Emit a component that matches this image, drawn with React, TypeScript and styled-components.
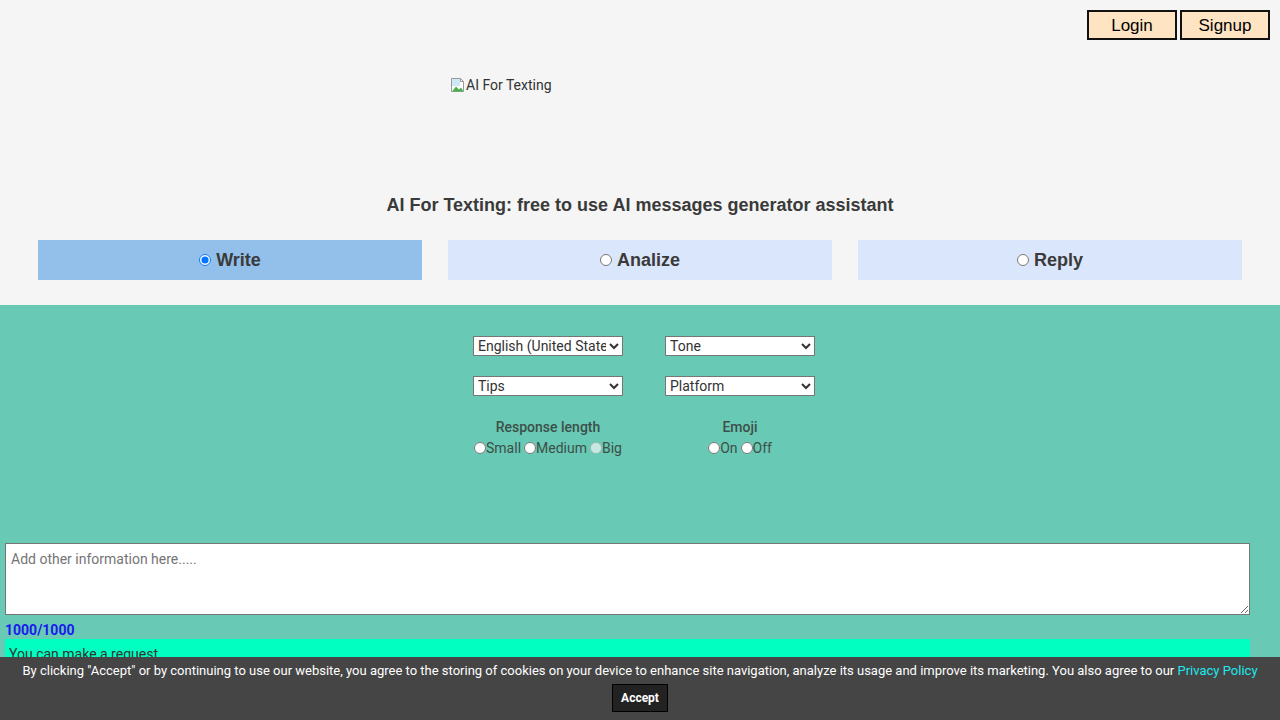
import React from "react";
import styled, { createGlobalStyle } from "styled-components";

const GlobalStyle = createGlobalStyle`
  html, body {
    margin: 0;
    padding: 0;
    background: #68c9b4;
    font-family: Roboto, "Liberation Sans", sans-serif;
    color: #333;
  }
`;

const Header = styled.header`
  background-color: #f5f5f5;
  padding: 10px 0 25px;
  display: flex;
  flex-direction: column;
`;

const AuthBar = styled.div`
  display: flex;
  justify-content: flex-end;
  gap: 3px;
  padding-right: 10px;
`;

const AuthButton = styled.button`
  width: 90px;
  height: 30px;
  background-color: #ffe4c4;
  border: 2px solid #111;
  font-family: "Liberation Sans", Arial, sans-serif;
  font-size: 17px;
  color: #000;
  padding: 2px 0 0;
`;

const LogoRow = styled.div`
  height: 142px;
  padding-left: 450px;
  padding-top: 37px;
  box-sizing: border-box;
`;

const LogoAlt = styled.span`
  display: inline-flex;
  align-items: center;
  font-size: 14px;
  color: #333;
`;

const Title = styled.h1`
  margin: 13px 0 24px;
  text-align: center;
  font-family: "Liberation Sans", Arial, sans-serif;
  font-size: 18px;
  font-weight: 700;
  color: #3a3a3a;
`;

const Tabs = styled.div`
  display: grid;
  grid-template-columns: repeat(3, 1fr);
  gap: 26px;
  padding: 0 38px;
`;

const Tab = styled.label<{ $active?: boolean }>`
  height: 40px;
  display: flex;
  align-items: center;
  justify-content: center;
  background-color: ${(p) => (p.$active ? "#92c0ea" : "#dae6fb")};
  font-family: "Liberation Sans", Arial, sans-serif;
  font-size: 18px;
  font-weight: 700;
  color: #3a3a3a;

  input {
    width: 12px;
    height: 12px;
    margin: 0 5px 0 0;
  }
`;

const Workspace = styled.main`
  background-color: #68c9b4;
  padding-top: 31px;
`;

const Options = styled.div`
  display: grid;
  grid-template-columns: 150px 150px;
  column-gap: 42px;
  row-gap: 20px;
  justify-content: center;
  margin-left: 8px;
`;

const Select = styled.select`
  width: 150px;
  height: 20px;
  font-family: Roboto, sans-serif;
  font-size: 14px;
  color: #333;
  background: #fff;
  border: 1px solid #767676;
  padding: 0;
`;

const Group = styled.div`
  display: flex;
  flex-direction: column;
  align-items: center;
  margin-top: 3px;
  font-size: 14px;
  color: #3d4f49;
`;

const GroupLabel = styled.span`
  font-weight: 500;
  line-height: 16px;
  margin-bottom: 5px;
`;

const RadioRow = styled.div`
  display: flex;
  white-space: nowrap;
  align-items: center;
  margin-left: -6px;
  margin-right: -6px;

  label {
    display: flex;
    align-items: center;
  }

  input {
    width: 12px;
    height: 12px;
    margin: 0;
  }

  label + label {
    margin-left: 3px;
  }
`;

const Notes = styled.div`
  padding: 87px 30px 0 5px;
  display: flex;
  flex-direction: column;
`;

const TextArea = styled.textarea`
  height: 72px;
  box-sizing: border-box;
  border: 1px solid #767676;
  font-family: Roboto, sans-serif;
  font-size: 14px;
  padding: 7px 5px;
  resize: vertical;

  &::placeholder {
    color: #757575;
  }
`;

const Counter = styled.span`
  font-size: 14px;
  font-weight: 700;
  color: #1a1aee;
  margin: 7px 0 1px;
`;

const Status = styled.div`
  background-color: #00ffc0;
  font-size: 14px;
  color: #333;
  padding: 7px 4px 40px;
`;

const CookieBanner = styled.div`
  position: fixed;
  left: 0;
  right: 0;
  bottom: 0;
  height: 63px;
  background-color: #454545;
  display: flex;
  flex-direction: column;
  align-items: center;
  padding-top: 6px;
  box-sizing: border-box;
  color: #fff;
  font-size: 13px;
  font-weight: 400;
`;

const CookieText = styled.p`
  margin: 0 0 6px;
  white-space: nowrap;

  a {
    color: #1de9f0;
    text-decoration: none;
  }
`;

const AcceptButton = styled.button`
  width: 56px;
  height: 28px;
  background: #222;
  border: 1px solid #000;
  color: #fff;
  font-family: Roboto, sans-serif;
  font-size: 12px;
  font-weight: 700;
  padding: 0;
`;

const BrokenImage = () => (
  <svg width="16" height="16" viewBox="0 0 16 16">
    <path d="M1.5 1.5h9l3 3v10h-12z" fill="#fff" stroke="#9a9a9a" />
    <path d="M10.5 1.5v3h3" fill="none" stroke="#9a9a9a" />
    <rect x="2" y="2" width="8" height="7" fill="#cfe6f7" />
    <path d="M2 14.5l4-5 3 3 2-2 2.5 4z" fill="#4caf50" />
  </svg>
);

export default function App() {
  return (
    <>
      <GlobalStyle />
      <Header>
        <AuthBar>
          <AuthButton>Login</AuthButton>
          <AuthButton>Signup</AuthButton>
        </AuthBar>
        <LogoRow>
          <LogoAlt>
            <BrokenImage />
            AI For Texting
          </LogoAlt>
        </LogoRow>
        <Title>AI For Texting: free to use AI messages generator assistant</Title>
        <Tabs>
          <Tab $active>
            <input type="radio" name="mode" defaultChecked />
            Write
          </Tab>
          <Tab>
            <input type="radio" name="mode" />
            Analize
          </Tab>
          <Tab>
            <input type="radio" name="mode" />
            Reply
          </Tab>
        </Tabs>
      </Header>
      <Workspace>
        <Options>
          <Select defaultValue="en">
            <option value="en">English (United States)</option>
          </Select>
          <Select>
            <option>Tone</option>
          </Select>
          <Select>
            <option>Tips</option>
          </Select>
          <Select>
            <option>Platform</option>
          </Select>
          <Group>
            <GroupLabel>Response length</GroupLabel>
            <RadioRow>
              <label>
                <input type="radio" name="len" />
                Small
              </label>
              <label>
                <input type="radio" name="len" />
                Medium
              </label>
              <label>
                <input type="radio" name="len" disabled />
                Big
              </label>
            </RadioRow>
          </Group>
          <Group>
            <GroupLabel>Emoji</GroupLabel>
            <RadioRow>
              <label>
                <input type="radio" name="emoji" />
                On
              </label>
              <label>
                <input type="radio" name="emoji" />
                Off
              </label>
            </RadioRow>
          </Group>
        </Options>
        <Notes>
          <TextArea placeholder="Add other information here....." />
          <Counter>1000/1000</Counter>
          <Status>You can make a request</Status>
        </Notes>
      </Workspace>
      <CookieBanner>
        <CookieText>
          By clicking "Accept" or by continuing to use our website, you agree to the storing of cookies on your device to
          enhance site navigation, analyze its usage and improve its marketing. You also agree to our{" "}
          <a href="#">Privacy Policy</a>
        </CookieText>
        <AcceptButton>Accept</AcceptButton>
      </CookieBanner>
    </>
  );
}
